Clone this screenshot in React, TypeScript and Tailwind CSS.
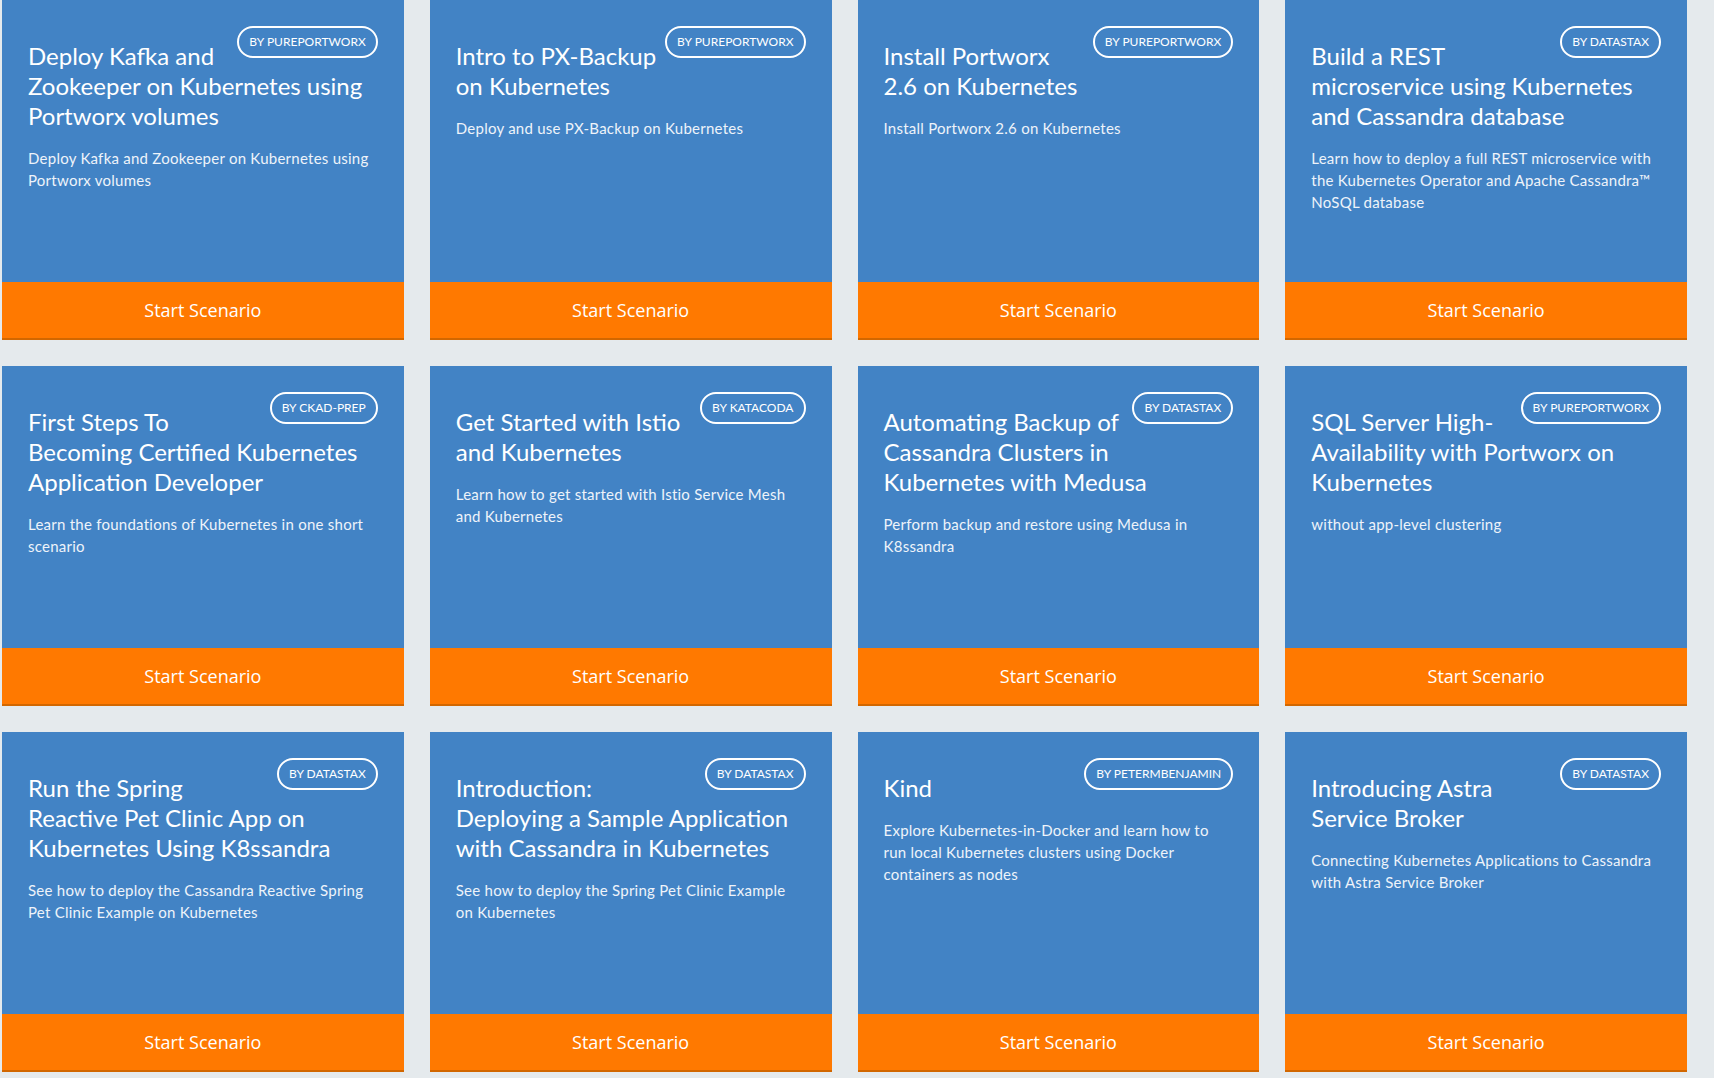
import React from "react";

type Card = { title: string; by: string; desc: string };

const cards: Card[] = [
  { title: "Deploy Kafka and Zookeeper on Kubernetes using Portworx volumes", by: "BY PUREPORTWORX", desc: "Deploy Kafka and Zookeeper on Kubernetes using Portworx volumes" },
  { title: "Intro to PX-Backup on Kubernetes", by: "BY PUREPORTWORX", desc: "Deploy and use PX-Backup on Kubernetes" },
  { title: "Install Portworx 2.6 on Kubernetes", by: "BY PUREPORTWORX", desc: "Install Portworx 2.6 on Kubernetes" },
  { title: "Build a REST microservice using Kubernetes and Cassandra database", by: "BY DATASTAX", desc: "Learn how to deploy a full REST microservice with the Kubernetes Operator and Apache Cassandra™ NoSQL database" },
  { title: "First Steps To Becoming Certified Kubernetes Application Developer", by: "BY CKAD-PREP", desc: "Learn the foundations of Kubernetes in one short scenario" },
  { title: "Get Started with Istio and Kubernetes", by: "BY KATACODA", desc: "Learn how to get started with Istio Service Mesh and Kubernetes" },
  { title: "Automating Backup of Cassandra Clusters in Kubernetes with Medusa", by: "BY DATASTAX", desc: "Perform backup and restore using Medusa in K8ssandra" },
  { title: "SQL Server High-Availability with Portworx on Kubernetes", by: "BY PUREPORTWORX", desc: "without app-level clustering" },
  { title: "Run the Spring Reactive Pet Clinic App on Kubernetes Using K8ssandra", by: "BY DATASTAX", desc: "See how to deploy the Cassandra Reactive Spring Pet Clinic Example on Kubernetes" },
  { title: "Introduction: Deploying a Sample Application with Cassandra in Kubernetes", by: "BY DATASTAX", desc: "See how to deploy the Spring Pet Clinic Example on Kubernetes" },
  { title: "Kind", by: "BY PETERMBENJAMIN", desc: "Explore Kubernetes-in-Docker and learn how to run local Kubernetes clusters using Docker containers as nodes" },
  { title: "Introducing Astra Service Broker", by: "BY DATASTAX", desc: "Connecting Kubernetes Applications to Cassandra with Astra Service Broker" },
];

function ScenarioCard({ c }: { c: Card }) {
  return (
    <div className="flex h-[340px] flex-col">
      <div className="flex-1 bg-[#4283c5] p-[26px] text-white [font-family:Lato,'Noto_Sans',sans-serif]">
        <span className="float-right ml-1 flex h-8 items-center rounded-full border-2 border-white px-[10px] text-[12px] leading-none">
          {c.by}
        </span>
        <h3 className="mt-[15px] text-[24px] font-normal leading-[30px]">{c.title}</h3>
        <p className="mt-4 text-[15px] leading-[22px] tracking-[0.25px] text-[#eef3fa]">{c.desc}</p>
      </div>
      <div className="flex h-[58px] items-center justify-center border-b-2 border-[#d26700] bg-[#ff7900] text-[18px] text-white [font-family:'Open_Sans',sans-serif]">
        Start Scenario
      </div>
    </div>
  );
}

export default function App() {
  return (
    <div className="min-h-[1078px] w-[1714px] bg-[#e5eaed] pb-[6px] pl-[2px] pr-[27px]">
      <div className="grid grid-cols-4 gap-[26px]">
        {cards.map((c, i) => (
          <ScenarioCard key={i} c={c} />
        ))}
      </div>
    </div>
  );
}
